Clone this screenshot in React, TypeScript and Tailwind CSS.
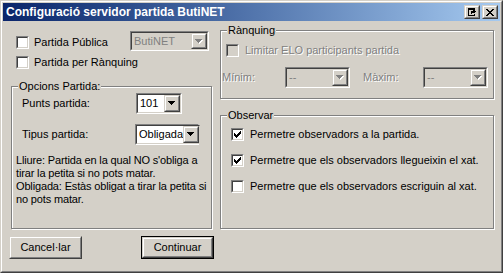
import React from 'react'

const font = { fontFamily: '"Liberation Sans", Arial, sans-serif' }

const Check = ({ checked = false, disabled = false }: { checked?: boolean; disabled?: boolean }) => (
  <span className="flex w-[13px] h-[13px] shrink-0 border border-t-[#808080] border-l-[#808080] border-b-white border-r-white">
    <span
      className={`flex flex-1 items-center justify-center border border-t-[#404040] border-l-[#404040] border-b-[#d4d0c8] border-r-[#d4d0c8] ${
        disabled ? 'bg-[#d4d0c8]' : 'bg-white'
      }`}
    >
      {checked && (
        <svg width="7" height="7" viewBox="0 0 7 7" shapeRendering="crispEdges">
          <path
            d="M6 0h1v1h-1zM5 1h2v1h-2zM0 2h1v1h-1zM4 2h3v1h-3zM0 3h2v1h-2zM3 3h3v1h-3zM0 4h5v1h-5zM1 5h3v1h-3zM2 6h1v1h-1z"
            fill="#000"
          />
        </svg>
      )}
    </span>
  </span>
)

const Arrow = ({ disabled = false }: { disabled?: boolean }) => (
  <svg width="8" height="5" viewBox="0 0 8 5" shapeRendering="crispEdges">
    {disabled && <path d="M1 1h7v1h-7zM2 2h5v1h-5zM3 3h3v1h-3zM4 4h1v1h-1z" fill="#fff" />}
    <path d="M0 0h7v1h-7zM1 1h5v1h-5zM2 2h3v1h-3zM3 3h1v1h-1z" fill={disabled ? '#808080' : '#000'} />
  </svg>
)

const Raised = ({ className = '', children }: { className?: string; children?: React.ReactNode }) => (
  <div className={`flex border border-t-[#d4d0c8] border-l-[#d4d0c8] border-b-[#404040] border-r-[#404040] ${className}`}>
    <div className="flex flex-1 items-center justify-center border border-t-white border-l-white border-b-[#808080] border-r-[#808080] bg-[#d4d0c8]">
      {children}
    </div>
  </div>
)

const Combo = ({ value, w, h = 21, disabled = false }: { value: string; w: string; h?: number; disabled?: boolean }) => (
  <div className={`flex ${w} ${h === 20 ? 'h-[20px]' : 'h-[21px]'} shrink-0 border border-t-[#808080] border-l-[#808080] border-b-white border-r-white`}>
    <div
      className={`flex flex-1 border border-t-[#404040] border-l-[#404040] border-b-[#d4d0c8] border-r-[#d4d0c8] ${
        disabled ? 'bg-[#d4d0c8]' : 'bg-white'
      }`}
    >
      <span className={`flex-1 pl-[2px] leading-[15px] pt-[1px] ${disabled ? 'text-[#808080]' : 'text-black'}`}>
        {value}
      </span>
      <Raised className="w-[16px]">
        <Arrow disabled={disabled} />
      </Raised>
    </div>
  </div>
)

const Frame = ({ label, className, children }: { label: string; className: string; children?: React.ReactNode }) => (
  <div className={`relative border border-[#808080] shadow-[inset_1px_1px_0_white,1px_1px_0_white] ${className}`}>
    <span className="absolute top-[-7px] left-[6px] bg-[#d4d0c8] px-[1px] leading-[13px]">{label}</span>
    {children}
  </div>
)

const dis = 'text-[#808080] [text-shadow:1px_1px_0_white]'

export default function App() {
  return (
    <div className="w-[504px] h-[274px] bg-white text-[11px] text-black" style={font}>
      <div className="w-[503px] h-[273px] flex border border-t-[#d4d0c8] border-l-[#d4d0c8] border-b-[#404040] border-r-[#404040]">
        <div className="flex flex-1 flex-col p-[1px] bg-[#d4d0c8] border border-t-white border-l-white border-b-[#808080] border-r-[#808080]">
          {/* title bar */}
          <div className="flex h-[18px] items-center bg-gradient-to-r from-[#0a246a] to-[#a6caf0] pl-[3px] pr-[2px]">
            <span className="flex-1 font-bold text-white text-[12px] leading-[14px]">
              Configuració servidor partida ButiNET
            </span>
            <Raised className="w-[16px] h-[14px]">
              <svg width="9" height="8" viewBox="0 0 9 8" shapeRendering="crispEdges">
                <path d="M0 0h7v2h-7zM0 2h1v6h-1zM6 2h1v1h-1zM6 6h1v2h-1zM1 7h5v1h-5zM3 3h1v3h-1zM4 3h4v1h-4z" fill="#000" />
                <path d="M5 2h1v1h-1zM5 4h1v1h-1zM6 3h2v1h-2zM4 4h3v1h-3z" fill="#000" />
              </svg>
            </Raised>
            <Raised className="w-[16px] h-[14px] ml-[2px]">
              <svg width="8" height="7" viewBox="0 0 8 7" shapeRendering="crispEdges">
                <path
                  d="M0 0h2v1h-2zM6 0h2v1h-2zM1 1h2v1h-2zM5 1h2v1h-2zM2 2h4v1h-4zM3 3h2v1h-2zM2 4h4v1h-4zM1 5h2v1h-2zM5 5h2v1h-2zM0 6h2v1h-2zM6 6h2v1h-2z"
                  fill="#000"
                />
              </svg>
            </Raised>
          </div>

          {/* body */}
          <div className="flex flex-1 flex-col">
            <div className="flex">
              <div className="ml-[8px] w-[201px] flex flex-col">
                <div className="mt-[10px] flex h-[20px] items-start">
                  <div className="mt-[5px] w-[119px] flex items-center gap-[5px] pl-[5px]">
                    <Check />
                    <span className="leading-[13px]">Partida Pública</span>
                  </div>
                  <Combo value="ButiNET" w="w-[79px]" h={20} disabled />
                </div>
                <div className="mt-[5px] flex items-center gap-[5px] pl-[5px]">
                  <Check />
                  <span className="leading-[13px]">Partida per Rànquing</span>
                </div>
                <Frame label="Opcions Partida:" className="mt-[17px] w-[201px] h-[143px]">
                  <div className="mt-[6px] flex h-[21px] items-center">
                    <span className="w-[124px] pl-[10px]">Punts partida:</span>
                    <Combo value="101" w="w-[46px]" />
                  </div>
                  <div className="mt-[10px] flex h-[21px] items-center">
                    <span className="w-[123px] pl-[10px]">Tipus partida:</span>
                    <Combo value="Obligada" w="w-[64px]" />
                  </div>
                  <p className="mt-[9px] pl-[4px] leading-[13px] whitespace-nowrap tracking-[-0.15px]">
                    Lliure: Partida en la qual NO s'obliga a
                    <br />
                    tirar la petita si no pots matar.
                    <br />
                    Obligada: Estàs obligat a tirar la petita si
                    <br />
                    no pots matar.
                  </p>
                </Frame>
              </div>

              <div className="ml-[8px] w-[274px] flex flex-col">
                <Frame label="Rànquing" className="mt-[9px] h-[69px]">
                  <div className="mt-[13px] flex items-center gap-[6px] pl-[5px]">
                    <Check disabled />
                    <span className={`leading-[13px] ${dis}`}>Limitar ELO participants partida</span>
                  </div>
                  <div className="mt-[10px] flex h-[21px] items-center">
                    <span className={`w-[64px] pl-[1px] ${dis}`}>Mínim:</span>
                    <Combo value="--" w="w-[65px]" disabled />
                    <span className={`ml-[13px] w-[60px] ${dis}`}>Màxim:</span>
                    <Combo value="--" w="w-[65px]" disabled />
                  </div>
                </Frame>
                <Frame label="Observar" className="mt-[16px] h-[114px]">
                  <div className="mt-[12px] flex flex-col gap-[13px] pl-[10px]">
                    <div className="flex items-center gap-[6px]">
                      <Check checked />
                      <span className="leading-[13px]">Permetre observadors a la partida.</span>
                    </div>
                    <div className="flex items-center gap-[6px]">
                      <Check checked />
                      <span className="leading-[13px]">Permetre que els observadors llegueixin el xat.</span>
                    </div>
                    <div className="flex items-center gap-[6px]">
                      <Check />
                      <span className="leading-[13px]">Permetre que els observadors escriguin al xat.</span>
                    </div>
                  </div>
                </Frame>
              </div>
            </div>

            <div className="mt-[7px] flex">
              <Raised className="ml-[6px] w-[73px] h-[23px]">
                <span>Cancel·lar</span>
              </Raised>
              <div className="ml-[59px] w-[73px] h-[23px] flex border border-black">
                <Raised className="flex-1">
                  <span>Continuar</span>
                </Raised>
              </div>
            </div>
          </div>
        </div>
      </div>
    </div>
  )
}
